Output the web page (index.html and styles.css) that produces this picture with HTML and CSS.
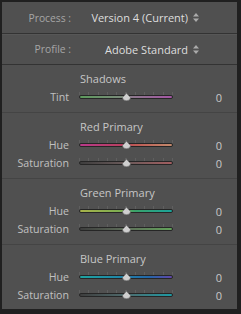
FILE: index.html
```html
<!doctype html>
<html lang="en">

<head>
    <meta charset="utf-8" />
    <meta name="viewport" content="width=device-width, initial-scale=1.0" />
    <title>Calibration</title>
    <link rel="stylesheet" href="styles.css">
</head>

<body>
    <div class="frame">
        <div class="panel">
            <div class="pick-row first">
                <div class="pick-label">Process :</div>
                <div class="pick-value">Version 4 (Current)</div>
                <svg class="updown" width="6" height="9" viewBox="0 0 6 9">
                    <path d="M3 0 L6 3.5 L0 3.5 Z M3 9 L6 5.5 L0 5.5 Z" />
                </svg>
            </div>
            <div class="pick-row">
                <div class="pick-label">Profile :</div>
                <div class="pick-value">Adobe Standard</div>
                <svg class="updown" width="6" height="9" viewBox="0 0 6 9">
                    <path d="M3 0 L6 3.5 L0 3.5 Z M3 9 L6 5.5 L0 5.5 Z" />
                </svg>
            </div>

            <!-- Shadows -->
            <div class="section">
                <div class="section-title">Shadows</div>
                <div class="slider-row">
                    <div class="s-label">Tint</div>
                    <div class="slider">
                        <div class="ticks"></div>
                        <div class="track tint"></div>
                        <svg class="thumb" width="9" height="8" viewBox="0 0 9 8">
                            <path d="M4.5 0.3 L8.5 4.6 Q8.5 7.7 4.5 7.7 Q0.5 7.7 0.5 4.6 Z" />
                        </svg>
                    </div>
                    <div class="s-value">0</div>
                </div>
            </div>

            <!-- Red -->
            <div class="section">
                <div class="section-title">Red Primary</div>
                <div class="slider-row">
                    <div class="s-label">Hue</div>
                    <div class="slider">
                        <div class="ticks"></div>
                        <div class="track red-hue"></div>
                        <svg class="thumb" width="9" height="8" viewBox="0 0 9 8">
                            <path d="M4.5 0.3 L8.5 4.6 Q8.5 7.7 4.5 7.7 Q0.5 7.7 0.5 4.6 Z" />
                        </svg>
                    </div>
                    <div class="s-value">0</div>
                </div>
                <div class="slider-row">
                    <div class="s-label">Saturation</div>
                    <div class="slider">
                        <div class="ticks"></div>
                        <div class="track red-sat"></div>
                        <svg class="thumb" width="9" height="8" viewBox="0 0 9 8">
                            <path d="M4.5 0.3 L8.5 4.6 Q8.5 7.7 4.5 7.7 Q0.5 7.7 0.5 4.6 Z" />
                        </svg>
                    </div>
                    <div class="s-value">0</div>
                </div>
            </div>

            <!-- Green -->
            <div class="section">
                <div class="section-title">Green Primary</div>
                <div class="slider-row">
                    <div class="s-label">Hue</div>
                    <div class="slider">
                        <div class="ticks"></div>
                        <div class="track green-hue"></div>
                        <svg class="thumb" width="9" height="8" viewBox="0 0 9 8">
                            <path d="M4.5 0.3 L8.5 4.6 Q8.5 7.7 4.5 7.7 Q0.5 7.7 0.5 4.6 Z" />
                        </svg>
                    </div>
                    <div class="s-value">0</div>
                </div>
                <div class="slider-row">
                    <div class="s-label">Saturation</div>
                    <div class="slider">
                        <div class="ticks"></div>
                        <div class="track green-sat"></div>
                        <svg class="thumb" width="9" height="8" viewBox="0 0 9 8">
                            <path d="M4.5 0.3 L8.5 4.6 Q8.5 7.7 4.5 7.7 Q0.5 7.7 0.5 4.6 Z" />
                        </svg>
                    </div>
                    <div class="s-value">0</div>
                </div>
            </div>

            <!-- Blue -->
            <div class="section">
                <div class="section-title">Blue Primary</div>
                <div class="slider-row">
                    <div class="s-label">Hue</div>
                    <div class="slider">
                        <div class="ticks"></div>
                        <div class="track blue-hue"></div>
                        <svg class="thumb" width="9" height="8" viewBox="0 0 9 8">
                            <path d="M4.5 0.3 L8.5 4.6 Q8.5 7.7 4.5 7.7 Q0.5 7.7 0.5 4.6 Z" />
                        </svg>
                    </div>
                    <div class="s-value">0</div>
                </div>
                <div class="slider-row">
                    <div class="s-label">Saturation</div>
                    <div class="slider">
                        <div class="ticks"></div>
                        <div class="track blue-sat"></div>
                        <svg class="thumb" width="9" height="8" viewBox="0 0 9 8">
                            <path d="M4.5 0.3 L8.5 4.6 Q8.5 7.7 4.5 7.7 Q0.5 7.7 0.5 4.6 Z" />
                        </svg>
                    </div>
                    <div class="s-value">0</div>
                </div>
            </div>
        </div>
    </div>
</body>

</html>
```

FILE: styles.css
```css
html,
body {
    margin: 0;
    background: #202020;
}

body {
    font-family: "Open Sans", "Liberation Sans", sans-serif;
    color: #c4c4c4;
}

.frame {
    width: 241px;
    height: 314px;
    padding: 2px 4px 5px 2px;
    box-sizing: border-box;
}

.panel {
    height: 100%;
    background: #505050;
}

/* Process / Profile pickers */
.pick-row {
    display: flex;
    align-items: center;
    height: 30px;
    padding-right: 38px;
    border-top: 1px solid #333;
    box-shadow: inset 0 1px 0 #575757;
}

.pick-row.first {
    height: 31px;
    border-top: 0;
    box-shadow: none;
}

.pick-label {
    width: 69px;
    text-align: right;
    font-size: 10.3px;
    color: #a6a6a6;
}

.pick-value {
    flex: 1;
    text-align: right;
    font-size: 11px;
    color: #dedede;
}

.updown {
    margin-left: 5px;
    fill: #ababab;
}

/* Sections */
.section {
    padding: 7px 0 6px;
    border-top: 1px solid #444;
}

.pick-row + .section {
    border-top-color: #333;
}

.section-title {
    height: 14px;
    line-height: 14px;
    margin: 0 0 2px 78px;
    font-size: 11px;
    color: #c6c6c6;
}

.slider-row {
    display: flex;
    align-items: center;
    height: 18px;
}

.s-label {
    width: 67px;
    text-align: right;
    font-size: 10.6px;
    color: #c0c0c0;
}

.slider {
    position: relative;
    width: 94px;
    height: 18px;
    margin-left: 10px;
    display: flex;
    flex-direction: column;
    justify-content: center;
}

.ticks {
    position: absolute;
    left: 0;
    right: 0;
    top: 4px;
    height: 3px;
    background: repeating-linear-gradient(to right, #5f5f5f 0 1px, transparent 1px 9.3px);
}

.track {
    height: 2px;
    border: 1px solid #262626;
    border-radius: 2px;
}

.thumb {
    position: absolute;
    left: 43px;
    top: 5px;
    fill: #cfcfcf;
    stroke: #6a6a6a;
    stroke-width: 0.6;
}

.s-value {
    width: 49px;
    text-align: right;
    font-size: 11px;
    color: #c8c8c8;
}

/* Track colours */
.tint {
    background: linear-gradient(to right, #5d9a5d, #7a8a7a 45%, #8c7a8c 55%, #a455a4);
}

.red-hue {
    background: linear-gradient(to right, #b8398a, #b84060 45%, #bf5a55 60%, #c38a6c);
}

.red-sat {
    background: linear-gradient(to right, #3e3e3e, #6a5a5a 50%, #a25e60);
}

.green-hue {
    background: linear-gradient(to right, #a7b24a, #7cae52 45%, #3aa26a 60%, #1aa39a);
}

.green-sat {
    background: linear-gradient(to right, #3e3e3e, #5f6f5a 50%, #62a25a);
}

.blue-hue {
    background: linear-gradient(to right, #1ea3a0, #1f84a8 45%, #2366a8 75%, #6246a8);
}

.blue-sat {
    background: linear-gradient(to right, #3e3e3e, #4f6a6c 50%, #1d9aa4);
}
```
